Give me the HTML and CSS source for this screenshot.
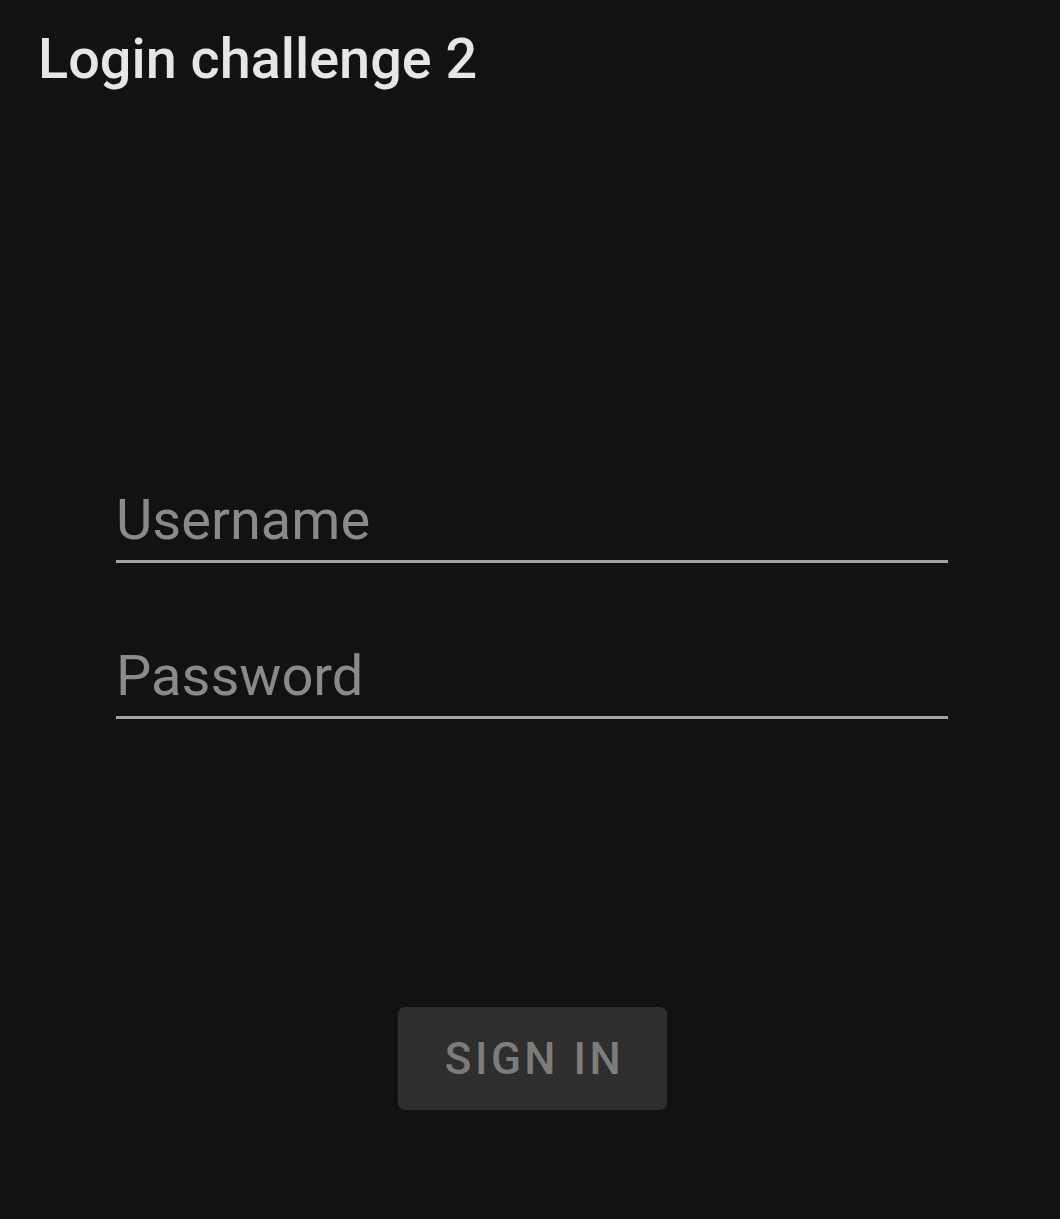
FILE: index.html
```html
<!DOCTYPE html>
<html>
<head>
<meta charset="utf-8">
<link rel="stylesheet" href="styles.css">
</head>
<body>
<div class="screen">
  <h1 class="title">Login challenge 2</h1>
  <form class="form">
    <div class="fields">
      <label class="field"><span class="placeholder">Username</span></label>
      <label class="field"><span class="placeholder">Password</span></label>
    </div>
    <div class="actions">
      <button type="button" class="btn">SIGN IN</button>
    </div>
  </form>
</div>
</body>
</html>
```
FILE: styles.css
```css
html, body {
  margin: 0;
  padding: 0;
  background: #121212;
}
.screen {
  width: 1060px;
  height: 1219px;
  font-family: Roboto, "Liberation Sans", sans-serif;
  display: flex;
  flex-direction: column;
}
.title {
  margin: 0;
  padding: 24px 0 0 38px;
  font-size: 55.8px;
  font-weight: 500;
  color: #e6e6e6;
  line-height: 70px;
}
.form {
  display: flex;
  flex-direction: column;
  padding: 0 112px 0 116px;
}
.fields {
  margin-top: 394px;
  display: flex;
  flex-direction: column;
  gap: 81px;
}
.field {
  display: block;
  border-bottom: 3px solid #a3a3a3;
  height: 72px;
}
.placeholder {
  display: block;
  font-size: 56px;
  line-height: 66px;
  color: #8a8a8a;
  padding-top: 0;
  margin-top: -1px;
}
.actions {
  display: flex;
  justify-content: center;
  margin-top: 288px;
}
.btn {
  width: 269px;
  height: 103px;
  background: #2e2e2e;
  border: none;
  border-radius: 7px;
  color: #7c7c7c;
  font-family: Roboto, "Liberation Sans", sans-serif;
  font-weight: 500;
  font-size: 44px;
  letter-spacing: 3.5px;
  padding: 0 0 0 4px;
  margin-left: 1px;
}
```
